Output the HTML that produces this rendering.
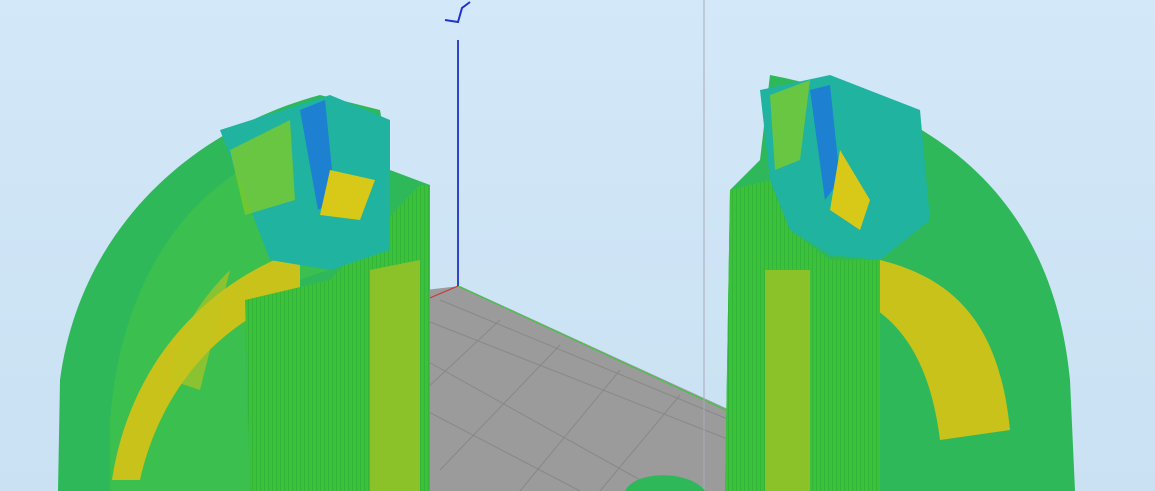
<!DOCTYPE html>
<html><head><style>
html,body{margin:0;padding:0;background:#cfe5f6;width:1155px;height:491px;overflow:hidden}
svg{display:block}
</style></head><body>
<svg width="1155" height="491" viewBox="0 0 1155 491" xmlns="http://www.w3.org/2000/svg">
<defs>
<linearGradient id="bg" x1="0" y1="0" x2="0" y2="1"><stop offset="0" stop-color="#d3e8f8"/><stop offset="1" stop-color="#c9e1f3"/></linearGradient>
<pattern id="grid" width="40" height="40" patternUnits="userSpaceOnUse" patternTransform="rotate(30)"><rect width="40" height="40" fill="#9a9a9a"/><path d="M0 0H40M0 0V40" stroke="#8a8a8a" stroke-width="1"/></pattern>
<pattern id="str" width="4" height="4" patternUnits="userSpaceOnUse"><rect width="4" height="4" fill="#3cc23a"/><path d="M0 0V4" stroke="#2aa83a" stroke-width="1"/></pattern>
</defs>
<rect width="1155" height="491" fill="url(#bg)"/>
<!-- bed -->
<polygon points="425,290 460,286 730,410 730,491 425,491" fill="#9b9b9b"/>
<g stroke="#888" stroke-width="1">
<line x1="425" y1="320" x2="730" y2="440"/><line x1="425" y1="360" x2="660" y2="491"/><line x1="425" y1="410" x2="580" y2="491"/><line x1="440" y1="300" x2="730" y2="420"/>
<line x1="500" y1="320" x2="425" y2="390"/><line x1="560" y1="345" x2="440" y2="470"/><line x1="620" y1="370" x2="520" y2="491"/><line x1="680" y1="395" x2="600" y2="491"/>
</g>
<line x1="458" y1="286" x2="730" y2="412" stroke="#3c3" stroke-width="1"/>
<line x1="425" y1="300" x2="458" y2="286" stroke="#c33" stroke-width="1"/>
<line x1="458" y1="40" x2="458" y2="286" stroke="#3344cc" stroke-width="2"/>
<path d="M445 20 L458 22 L462 8 L470 2" stroke="#2233cc" stroke-width="2" fill="none"/>
<line x1="704" y1="0" x2="704" y2="491" stroke="#aab" stroke-width="1"/>
<!-- left object -->
<path d="M320 95 C190 130 80 230 60 380 L58 491 L430 491 L430 185 L390 170 L380 110 Z" fill="#2fb85a"/>
<path d="M280 150 C180 190 120 290 110 420 L110 491 L250 491 L245 330 C260 300 290 280 330 270 L320 160 Z" fill="#3bbf4e"/>
<path d="M300 250 C210 280 130 360 112 480 L140 480 C160 390 220 320 300 295 Z" fill="#c9c21a"/>
<path d="M230 270 C200 300 180 330 170 380 L200 390 L220 310 Z" fill="#c2c420" opacity=".6"/>
<path d="M245 300 L330 280 L420 185 L430 185 L430 491 L250 491 Z" fill="url(#str)"/>
<path d="M370 270 L420 260 L420 491 L370 491 Z" fill="#8bc22a"/>
<path d="M220 130 L330 95 L390 120 L390 250 L330 270 L270 260 Z" fill="#1fb3a0"/>
<path d="M300 110 L325 100 L335 200 L318 210 Z" fill="#1d80d0"/>
<path d="M330 170 L375 180 L360 220 L320 215 Z" fill="#d8c818"/>
<path d="M230 150 L290 120 L295 200 L245 215 Z" fill="#7acb2c" opacity=".8"/>
<!-- right object -->
<path d="M770 75 C900 100 1050 170 1070 380 L1075 491 L725 491 L730 190 L760 160 Z" fill="#2fb85a"/>
<path d="M880 260 C960 280 1000 330 1010 430 L940 440 C930 360 900 320 860 300 Z" fill="#c9c21a"/>
<path d="M730 190 L770 180 L790 230 L830 260 L880 260 L880 491 L725 491 Z" fill="url(#str)"/>
<path d="M765 270 L810 270 L810 491 L765 491 Z" fill="#8bc22a"/>
<path d="M760 90 L830 75 L920 110 L930 220 L880 260 L830 255 L790 230 L770 180 Z" fill="#1fb3a0"/>
<path d="M810 90 L830 85 L840 180 L825 200 Z" fill="#1d80d0"/>
<path d="M840 150 L870 200 L860 230 L830 210 Z" fill="#d8c818"/>
<path d="M770 95 L810 80 L800 160 L775 170 Z" fill="#7acb2c" opacity=".8"/>
<!-- bottom center dome -->
<path d="M625 491 C635 470 690 470 705 491 Z" fill="#2fb85a"/>
</svg>
</body></html>
